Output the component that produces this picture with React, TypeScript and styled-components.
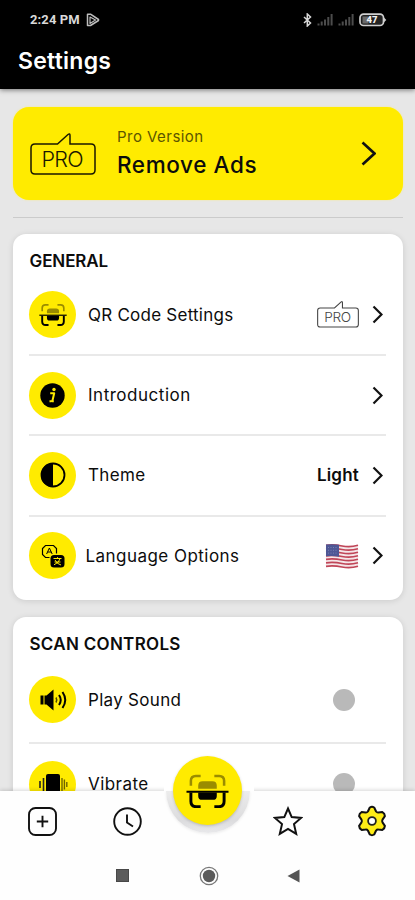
import React from 'react';
import styled, { createGlobalStyle } from 'styled-components';

const YELLOW = '#ffeb00';
const OLIVE = '#9a8c00';

const GlobalStyle = createGlobalStyle`
  * { box-sizing: border-box; }
  body { margin: 0; background: #e7e7e7; font-family: Inter, "Open Sans", sans-serif; color: #0c0c0c; }
  svg { display: block; flex: none; }
`;

const Screen = styled.div`
  display: flex;
  flex-direction: column;
  width: 415px;
  height: 900px;
  overflow: hidden;
`;

const Header = styled.header`
  height: 89px;
  background: #000;
  color: #fff;
  flex: none;
  box-shadow: 0 1px 5px rgba(0, 0, 0, 0.5);
  position: relative;
`;

const StatusBar = styled.div`
  display: flex;
  align-items: center;
  height: 39px;
  padding: 0 28px 0 30px;
  gap: 6px;
`;

const Clock = styled.span`
  font: 700 13px/16px Roboto, sans-serif;
  letter-spacing: 0.1px;
  color: #d9d9d9;
`;

const StatusIcons = styled.div`
  display: flex;
  align-items: center;
  margin-left: auto;
  gap: 5px;
`;

const Title = styled.h1`
  margin: 0;
  padding-left: 18px;
  font-size: 23px;
  font-weight: 600;
  line-height: 45px;
  letter-spacing: 0.25px;
`;

const Content = styled.main`
  flex: 1;
  min-height: 0;
  overflow: hidden;
  padding: 18px 12px 0 13px;
`;

const Promo = styled.section`
  display: flex;
  align-items: center;
  height: 93px;
  padding: 0 27px 0 17px;
  border-radius: 16px;
  background: ${YELLOW};
  box-shadow: 0 0 2px rgba(255, 240, 120, 0.9);
`;

const PromoText = styled.div`
  display: flex;
  flex-direction: column;
  margin: -3px auto 0 21px;
`;

const PromoCaption = styled.span`
  font-size: 15px;
  line-height: 26px;
  letter-spacing: 0.46px;
  color: #5c5500;
`;

const PromoAction = styled.span`
  font-size: 22.500px;
  font-weight: 500;
  line-height: 30px;
  letter-spacing: 0.6px;
`;

const Separator = styled.hr`
  height: 1px;
  margin: 17px 0 16px;
  border: 0;
  background: #cbcbcb;
`;

const Card = styled.section`
  margin-bottom: 17px;
  padding: 13px 17px 0 16px;
  border-radius: 13px;
  background: #fff;
  box-shadow: 0 1px 6px rgba(0, 0, 0, 0.12);
`;

const GeneralCard = styled(Card)`
  height: 366px;
`;

const ScanCard = styled(Card)`
  height: 230px;
`;

const CardTitle = styled.h2<{ $tracking: number }>`
  margin: 0;
  padding-left: 0.5px;
  font-size: 17px;
  font-weight: 600;
  line-height: 28px;
  letter-spacing: ${(p) => p.$tracking}px;
`;

const Row = styled.div<{ $height: number }>`
  display: flex;
  align-items: center;
  height: ${(p) => p.$height}px;
  border-bottom: 2px solid #e9e9e9;
  padding-right: 3px;

  &:last-child { border-bottom-color: transparent; }
`;

const Disc = styled.div`
  display: flex;
  align-items: center;
  justify-content: center;
  width: 47px;
  height: 47px;
  border-radius: 50%;
  background: ${YELLOW};
  flex: none;
`;

const RowLabel = styled.span<{ $tracking: number; $gap?: number }>`
  margin-left: ${(p) => p.$gap ?? 12}px;
  font-size: 17px;
  line-height: 24px;
  letter-spacing: ${(p) => p.$tracking}px;
  white-space: nowrap;
`;

const RowEnd = styled.div`
  display: flex;
  align-items: center;
  gap: 13px;
  margin-left: auto;
`;

const RowValue = styled.span`
  font-size: 17px;
  font-weight: 600;
  line-height: 24px;
  letter-spacing: 0.2px;
`;

const ToggleKnob = styled.span`
  width: 22px;
  height: 22px;
  margin-right: 28px;
  border-radius: 50%;
  background: #b9b9b9;
`;

const Footer = styled.footer`
  position: relative;
  flex: none;
  height: 109px;
  background: #fefefe;
  box-shadow: 0 -1px 4px rgba(0, 0, 0, 0.16);
`;

const TabBar = styled.nav`
  display: grid;
  grid-template-columns: 85px 84px 77px 83px 86px;
  place-items: center;
  height: 60px;
`;

const SystemBar = styled.div`
  display: grid;
  grid-template-columns: 86px 86px 84px;
  justify-content: center;
  place-items: center;
  height: 49px;
`;

const FabRing = styled.div`
  position: absolute;
  left: 166px;
  top: 0;
  width: 84px;
  height: 42px;
  border-radius: 0 0 42px 42px;
  background: linear-gradient(#ececec, #dcdcde 70%, #e9e9eb);
  box-shadow: 0 1px 3px rgba(0, 0, 0, 0.08);
`;

const FabGap = styled.div`
  position: absolute;
  left: 164px;
  top: -5px;
  width: 90px;
  height: 5px;
  background: #fff;
`;

const Fab = styled.div`
  position: absolute;
  left: 173px;
  top: -35px;
  display: flex;
  align-items: center;
  justify-content: center;
  width: 69px;
  height: 69px;
  border-radius: 50%;
  background: ${YELLOW};
  box-shadow: 0 1px 3px rgba(0, 0, 0, 0.18);
`;

const ScanIcon = ({ width }: { width: number }) => (
  <svg width={width} height={(width * 36) / 44} viewBox="0 0 44 36" fill="none">
    <g stroke={OLIVE} strokeWidth="2.6">
      <path d="M5 13V8q0-5 5-5h5" />
      <path d="M39 13V8q0-5-5-5h-5" />
    </g>
    <path d="M12.5 16v-3q0-4.500 4.500-4.500h10q4.500 0 4.500 4.500v3z" fill={OLIVE} />
    <path d="M0.500 19.200h43" stroke="#000" strokeWidth="1.9" />
    <path d="M12.500 20h19v3.500q0 4-4 4h-11q-4 0-4-4z" fill="#000" />
    <g stroke="#000" strokeWidth="3">
      <path d="M5 20v9q0 5.500 5.500 5.500H15" />
      <path d="M39 20v9q0 5.500-5.500 5.500H29" />
    </g>
  </svg>
);

const ProBadge = ({ width, color, stroke }: { width: number; color: string; stroke: number }) => (
  <svg width={width} height={(width * 42) / 66} viewBox="0 0 66 42" fill="none">
    <path
      d="M5 11h22.500L38 1.500q2-1.500 2 1V11h21q4 0 4 4v22q0 4-4 4H5q-4 0-4-4V15q0-4 4-4z"
      stroke={color}
      strokeWidth={stroke}
    />
    <text x="11.500" y="33.500" fontFamily="Inter, sans-serif" fontSize="21.500" fontWeight="300" letterSpacing="-0.700" fill={color}>
      PRO
    </text>
  </svg>
);

const Chevron = ({ width = 11, height = 19, weight = 2.2 }: { width?: number; height?: number; weight?: number }) => (
  <svg width={width} height={height} viewBox={`0 0 ${width} ${height}`} fill="none">
    <path
      d={`M1.500 1.500L${width - 1.5} ${height / 2}L1.500 ${height - 1.5}`}
      stroke="#111"
      strokeWidth={weight}
    />
  </svg>
);

const InfoIcon = () => (
  <svg width="25" height="25" viewBox="0 0 25 25">
    <circle cx="12.500" cy="12.500" r="12.200" fill="#000" />
    <circle cx="14" cy="6.500" r="1.700" fill={YELLOW} />
    <path d="M10.200 10.200h4l-1.900 8h1.500M9.500 18.200h2" fill="none" stroke={YELLOW} strokeWidth="2" strokeLinejoin="round" />
  </svg>
);

const ThemeIcon = () => (
  <svg width="26" height="26" viewBox="0 0 26 26">
    <circle cx="13" cy="13" r="11.500" fill="none" stroke="#000" strokeWidth="1.800" />
    <path d="M13 1a12 12 0 0 0 0 24z" fill="#000" />
  </svg>
);

const LanguageIcon = () => (
  <svg width="24" height="24" viewBox="0 0 24 24" fill="none">
    <path d="M8.500 13.500H4.500l-3-3v-6l3-3h8l3 3v5" stroke="#000" strokeWidth="1.200" />
    <path d="M5.600 10L8.400 4l2.800 6M6.600 8h3.600" stroke="#000" strokeWidth="1" />
    <rect x="9.500" y="11" width="14" height="12.500" rx="3.500" fill="#000" />
    <path d="M12.500 14.500h8M16.500 13.200v1.300M19 14.800q-1 4-6 6M14 16q1.800 4 6 5M13.500 18h6" stroke={YELLOW} strokeWidth="1" />
  </svg>
);

const SoundIcon = () => (
  <svg width="28" height="22" viewBox="0 0 28 22" fill="none">
    <path d="M1.500 6.500h3v9h-3zM5.500 6.500h2l7-6v21l-7-6h-2z" fill="#000" />
    <path d="M17 8.500q1.500 2.500 0 5" stroke="#4b4500" strokeWidth="1.500" />
    <path d="M20 6q3.500 5 0 10M23.500 3q5.500 8 0 16" stroke="#000" strokeWidth="2" />
  </svg>
);

const VibrateIcon = () => (
  <svg width="30" height="23" viewBox="0 0 30 23" fill="none">
    <rect x="8" y="1" width="14" height="21" rx="2" fill="#000" />
    <path d="M5.500 5v13M2 8v7" stroke="#222" strokeWidth="1.600" />
    <path d="M24 5v13M26.400 6.500v10M28.800 9v5" stroke="#6e6500" strokeWidth="1.400" />
  </svg>
);

const stripes = [0, 1, 2, 3, 4, 5, 6];

const FlagIcon = () => (
  <svg width="34" height="26" viewBox="0 0 34 26" fill="none">
    <path d="M1 1.500Q9 .500 17 2.200T33 1.500V24Q25 26 17 24T1 24z" fill="#f5e6e8" />
    {stripes.map((i) => (
      <path
        key={i}
        d={`M1 ${2.3 + i * 3.5}Q9 ${1.3 + i * 3.5} 17 ${3 + i * 3.5}T33 ${2.3 + i * 3.5}`}
        stroke="#c04658"
        strokeWidth="1.700"
      />
    ))}
    <path d="M1 1.500Q7.500 .700 14 1.700V13.700Q7.500 12.700 1 13.300z" fill="#4e5795" />
    <path d="M3 4.500h9M3 7.300h9M3 10.100h9" stroke="#8289b9" strokeWidth=".800" strokeDasharray="1 1.500" />
  </svg>
);

const PlayStoreIcon = () => (
  <svg width="14" height="14" viewBox="0 0 14 14" fill="none" stroke="#bdbdbd" strokeLinejoin="round">
    <path d="M1.500 1.200h3l8 5.300v1l-8 5h-3z" strokeWidth="1.500" />
    <path d="M4 4l5.500 3L4 10.500z" strokeWidth="1.200" />
  </svg>
);

const BluetoothIcon = () => (
  <svg width="9" height="14" viewBox="0 0 9 14" fill="none">
    <path d="M1 4l6.500 6L4.300 13V1l3.200 3L1 10" stroke="#d8d8d8" strokeWidth="1.500" />
  </svg>
);

const SignalIcon = () => (
  <svg width="16" height="13" viewBox="0 0 16 13" stroke="#4c4c4c" strokeWidth="2">
    <path d="M1.500 12.500v-2M4.700 12.500v-4M8 12.500v-6M11.300 12.500v-8.500M14.600 12.500V1" />
  </svg>
);

const BatteryIcon = () => (
  <svg width="28" height="14" viewBox="0 0 28 14">
    <rect x="1" y="1.200" width="23.500" height="11.300" rx="3.500" fill="#222" stroke="#cfcfcf" strokeWidth="1.700" />
    <path d="M3.500 3.500h6v7h-6z" fill="#6a6a6a" />
    <path d="M25 4.500l2.300 2.400L25 9.300z" fill="#cfcfcf" />
    <text x="13" y="10.300" textAnchor="middle" fontFamily="Roboto, sans-serif" fontWeight="900" fontSize="9.500" fill="#f4f4f4">
      47
    </text>
  </svg>
);

const AddIcon = () => (
  <svg width="29" height="29" viewBox="0 0 29 29" fill="none" stroke="#111">
    <rect x="1" y="1" width="27" height="27" rx="6.500" strokeWidth="1.900" />
    <path d="M14.500 8.800v11.400M8.800 14.500h11.400" strokeWidth="1.900" />
  </svg>
);

const HistoryIcon = () => (
  <svg width="29" height="29" viewBox="0 0 29 29" fill="none" stroke="#111" strokeWidth="1.900">
    <circle cx="14.500" cy="14.500" r="13.300" />
    <path d="M14 7.500v8l6 4" />
  </svg>
);

const StarIcon = () => (
  <svg width="30" height="30" viewBox="0 0 30 30" fill="none">
    <path
      d="M15 2.500l3.700 8.600 9.300.800-7 6.200 2.200 9.700L15 22.800l-8.200 5L9 18.100 2 11.900l9.300-.800z"
      stroke="#111"
      strokeWidth="2"
    />
  </svg>
);

const GearIcon = () => (
  <svg width="30" height="32" viewBox="0 0 30 32">
    <path
      d="M12.800 2.500q2.200-1.300 4.400 0l1.900 4q.900 1.200 2.300 1l4-.400q2.400 1.300 2.500 4l-2.400 3.500q-.700 1.400 0 2.800l2.400 3.500q-.100 2.700-2.500 4l-4-.400q-1.400-.200-2.300 1l-1.900 4q-2.200 1.300-4.400 0l-1.900-4q-.900-1.200-2.300-1l-4 .400q-2.400-1.300-2.500-4l2.400-3.500q.700-1.400 0-2.800L2.100 11.100q.100-2.700 2.500-4l4 .400q1.400.200 2.300-1z"
      fill="#ffed16"
      stroke="#111"
      strokeWidth="2"
      strokeLinejoin="round"
    />
    <circle cx="15" cy="16" r="3.900" fill="#fff" stroke="#222" strokeWidth="1.800" />
  </svg>
);

const RecentsIcon = () => (
  <svg width="13" height="13" viewBox="0 0 13 13">
    <rect x=".500" y=".500" width="12" height="12" fill="#5b5b5b" stroke="#484848" />
  </svg>
);

const HomeIcon = () => (
  <svg width="20" height="20" viewBox="0 0 20 20">
    <circle cx="10" cy="10" r="8.700" fill="none" stroke="#777" strokeWidth="1.300" />
    <circle cx="10" cy="10" r="6.200" fill="#5b5b5b" />
  </svg>
);

const BackIcon = () => (
  <svg width="13" height="14" viewBox="0 0 13 14">
    <path d="M12.500.500v13L.500 7z" fill="#555" />
  </svg>
);

export default function App() {
  return (
    <Screen>
      <GlobalStyle />
      <Header>
        <StatusBar>
          <Clock>2:24 PM</Clock>
          <PlayStoreIcon />
          <StatusIcons>
            <BluetoothIcon />
            <SignalIcon />
            <SignalIcon />
            <BatteryIcon />
          </StatusIcons>
        </StatusBar>
        <Title>Settings</Title>
      </Header>

      <Content>
        <Promo>
          <ProBadge width={66} color="#1a1800" stroke={1.5} />
          <PromoText>
            <PromoCaption>Pro Version</PromoCaption>
            <PromoAction>Remove Ads</PromoAction>
          </PromoText>
          <Chevron width={15} height={25} weight={2.6} />
        </Promo>
        <Separator />

        <GeneralCard>
          <CardTitle $tracking={-0.1}>GENERAL</CardTitle>
          <Row $height={81}>
            <Disc><ScanIcon width={28} /></Disc>
            <RowLabel $tracking={0.24}>QR Code Settings</RowLabel>
            <RowEnd>
              <ProBadge width={42} color="#444" stroke={1.7} />
              <Chevron />
            </RowEnd>
          </Row>
          <Row $height={80}>
            <Disc><InfoIcon /></Disc>
            <RowLabel $tracking={0.52}>Introduction</RowLabel>
            <RowEnd><Chevron /></RowEnd>
          </Row>
          <Row $height={80.5}>
            <Disc><ThemeIcon /></Disc>
            <RowLabel $tracking={0.35}>Theme</RowLabel>
            <RowEnd>
              <RowValue>Light</RowValue>
              <Chevron />
            </RowEnd>
          </Row>
          <Row $height={80}>
            <Disc><LanguageIcon /></Disc>
            <RowLabel $tracking={0.46} $gap={9.5}>Language Options</RowLabel>
            <RowEnd>
              <FlagIcon />
              <Chevron />
            </RowEnd>
          </Row>
        </GeneralCard>

        <ScanCard>
          <CardTitle $tracking={0.3}>SCAN CONTROLS</CardTitle>
          <Row $height={85.5}>
            <Disc><SoundIcon /></Disc>
            <RowLabel $tracking={0.3}>Play Sound</RowLabel>
            <RowEnd><ToggleKnob /></RowEnd>
          </Row>
          <Row $height={83.5}>
            <Disc><VibrateIcon /></Disc>
            <RowLabel $tracking={0.45}>Vibrate</RowLabel>
            <RowEnd><ToggleKnob /></RowEnd>
          </Row>
        </ScanCard>
      </Content>

      <Footer>
        <TabBar>
          <AddIcon />
          <HistoryIcon />
          <span />
          <StarIcon />
          <GearIcon />
        </TabBar>
        <SystemBar>
          <RecentsIcon />
          <HomeIcon />
          <BackIcon />
        </SystemBar>
        <FabGap />
        <FabRing />
        <Fab><ScanIcon width={43} /></Fab>
      </Footer>
    </Screen>
  );
}
